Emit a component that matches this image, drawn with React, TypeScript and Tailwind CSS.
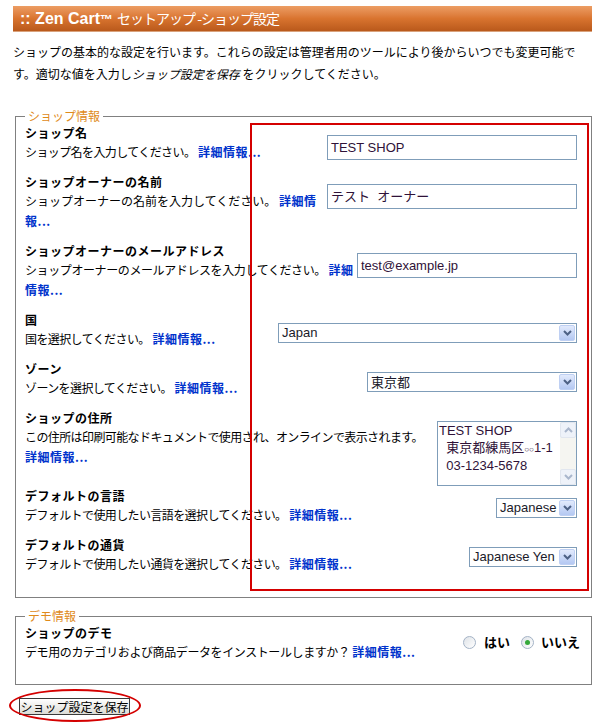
import React from 'react';

const cjk = "font-['Noto_Sans_CJK_JP','Noto_Sans_CJK_SC',sans-serif]";
const latin = "font-['Liberation_Sans','Noto_Sans_CJK_JP',sans-serif]";

function MoreInfo() {
  return <a className="cursor-pointer font-bold tracking-[0.5px] text-[#0033cc]">詳細情報...</a>;
}

function TextInput({ value, w }: { value: string; w: string }) {
  return (
    <div className={`flex h-[25px] items-center whitespace-pre border border-[#7f9db9] bg-white pl-[3px] text-[13px] text-[#2f1238] ${latin} ${w}`}>
      {value}
    </div>
  );
}

function Chevron({ color = '#4d6185', up = false }: { color?: string; up?: boolean }) {
  return (
    <svg width="9" height="6" viewBox="0 0 9 6">
      <path d={up ? 'M1 5 L4.5 1.5 L8 5' : 'M1 1 L4.5 4.5 L8 1'} fill="none" stroke={color} strokeWidth="2" />
    </svg>
  );
}

function SelectBox({ value, w, jp = false }: { value: string; w: string; jp?: boolean }) {
  return (
    <div className={`flex h-[20px] items-center border border-[#7f9db9] bg-white ${w}`}>
      <span className={`flex-1 pl-[3px] text-[13px] leading-[18px] text-[#1a1a2a] ${jp ? cjk : latin}`}>{value}</span>
      <span className="mr-[1px] flex h-[16px] w-[16px] items-center justify-center rounded-[2px] border border-[#bfd0f3] bg-gradient-to-b from-[#e2eafc] to-[#b4c8f2]">
        <Chevron />
      </span>
    </div>
  );
}

function AddressBox() {
  return (
    <div className="flex h-[65px] w-[140px] border border-[#7f9db9] bg-white">
      <div className={`flex-1 whitespace-pre pl-[1px] pt-[1px] text-[13px] leading-[16px] text-[#2f1238] ${latin}`}>
        <div>TEST SHOP</div>
        <div>
          {'  '}
          <span className={cjk}>東京都練馬区</span>
          <span className="text-[8px]">○○</span>1-1
        </div>
        <div>{'  '}03-1234-5678</div>
      </div>
      <div className="flex w-[16px] flex-col justify-between bg-[#f5f5f1]">
        <span className="flex h-[16px] items-center justify-center rounded-[2px] border border-[#e1e6ef] bg-[#eef2f9]">
          <Chevron up color="#a9b6cc" />
        </span>
        <span className="flex h-[16px] items-center justify-center rounded-[2px] border border-[#e1e6ef] bg-[#eef2f9]">
          <Chevron color="#a9b6cc" />
        </span>
      </div>
    </div>
  );
}

function Row({
  title,
  desc,
  control,
  top,
  mb,
  track = 'tracking-[-0.6px]',
}: {
  title: string;
  desc: React.ReactNode;
  control: React.ReactNode;
  top: string;
  mb: string;
  track?: string;
}) {
  return (
    <div className={`flow-root ${mb}`}>
      <div className={`float-right ${top}`}>{control}</div>
      <div className="text-[12px] font-bold leading-[19px] tracking-[0.5px]">{title}</div>
      <div className="text-[12px] leading-[20px]">
        <span className={track}>{desc}</span> <MoreInfo />
      </div>
    </div>
  );
}

function Radio({ checked = false }: { checked?: boolean }) {
  return (
    <span className="flex h-[13px] w-[13px] items-center justify-center rounded-full border border-[#a4b3c6] bg-gradient-to-br from-[#dfe3e8] to-white">
      {checked && <span className="h-[5px] w-[5px] rounded-full bg-[#35a83a]" />}
    </span>
  );
}

export default function App() {
  return (
    <div className={`relative h-[723px] w-[603px] bg-white pl-[13px] pt-[6px] text-black ${cjk}`}>
      <div className="flex h-[26px] w-[579px] items-center border-b border-[#d9a27c] bg-gradient-to-b from-[#ec9d63] via-[#d9742f] to-[#b9591b] pl-[7px] text-white">
        <span className={`text-[16px] font-bold ${latin}`}>
          :: Zen Cart<span className="text-[13px]">™</span>
        </span>
        <span className="ml-[4px] whitespace-pre text-[14px] tracking-[-1px]">セットアップ -ショップ設定</span>
      </div>

      <p className="mt-[9px] w-[576px] text-[12px] leading-[22px]">
        ショップの基本的な設定を行います。これらの設定は管理者用のツールにより後からいつでも変更可能です。適切な値を入力し
        <i>ショップ設定を保存</i> をクリックしてください。
      </p>

      <fieldset className="ml-[2px] mt-[24px] w-[577px] border border-[#808080] pb-[13px] pl-[9px] pr-[14px]">
        <legend className="px-[3px] text-[12px] leading-[14px] text-[#e08a1a]">ショップ情報</legend>
        <Row title="ショップ名" desc="ショップ名を入力してください。" top="mt-[12px]" mb="mb-[10px]" control={<TextInput value="TEST SHOP" w="w-[250px]" />} />
        <Row
          title="ショップオーナーの名前"
          desc="ショップオーナーの名前を入力してください。"
          top="mt-[12px]"
          mb="mb-[10px]"
          track="tracking-normal"
          control={<TextInput value="テスト  オーナー" w="w-[250px]" />}
        />
        <Row
          title="ショップオーナーのメールアドレス"
          desc="ショップオーナーのメールアドレスを入力してください。"
          top="mt-[12px]"
          mb="mb-[10px]"
          track="tracking-[-0.4px]"
          control={<TextInput value="test@example.jp" w="w-[220px]" />}
        />
        <Row title="国" desc="国を選択してください。" top="mt-[13px]" mb="mb-[10px]" control={<SelectBox value="Japan" w="w-[299px]" />} />
        <Row title="ゾーン" desc="ゾーンを選択してください。" top="mt-[13px]" mb="mb-[10px]" control={<SelectBox value="東京都" w="w-[210px]" jp />} />
        <Row
          title="ショップの住所"
          desc="この住所は印刷可能なドキュメントで使用され、オンラインで表示されます。"
          top="mt-[13px]"
          mb="mb-0"
          control={<AddressBox />}
        />
        <Row title="デフォルトの言語" desc="デフォルトで使用したい言語を選択してください。" top="mt-[12px]" mb="mb-[10px]" control={<SelectBox value="Japanese" w="w-[81px]" />} />
        <Row title="デフォルトの通貨" desc="デフォルトで使用したい通貨を選択してください。" top="mt-[12px]" mb="mb-[10px]" control={<SelectBox value="Japanese Yen" w="w-[108px]" />} />
      </fieldset>

      <fieldset className="ml-[2px] mt-[11px] w-[577px] border border-[#808080] pb-[12px] pl-[9px] pr-[11px]">
        <legend className="px-[3px] text-[12px] leading-[14px] text-[#e08a1a]">デモ情報</legend>
        <div className="mb-[10px] flow-root">
          <div className="float-right mt-[10px] flex h-[18px] items-center text-[13px] font-bold">
            <Radio />
            <span className="ml-[8px]">はい</span>
            <span className="ml-[11px]">
              <Radio checked />
            </span>
            <span className="ml-[7px]">いいえ</span>
          </div>
          <div className="text-[12px] font-bold leading-[19px] tracking-[0.5px]">ショップのデモ</div>
          <div className="text-[12px] leading-[20px]">
            <span className="tracking-[-0.4px]">デモ用のカテゴリおよび商品データをインストールしますか？</span> <MoreInfo />
          </div>
        </div>
      </fieldset>

      <button className="ml-[6px] mt-[13px] flex h-[17px] w-[111px] items-center justify-center whitespace-nowrap border border-[#3a3a3a] bg-gradient-to-b from-white to-[#dcdcd6] text-[12px] leading-[15px] text-black">
        ショップ設定を保存
      </button>

      <div className="pointer-events-none absolute left-[250px] top-[123px] h-[468px] w-[339px] border-2 border-[#d40000]" />
      <div className="pointer-events-none absolute left-[9px] top-[689px] h-[33px] w-[132px] rounded-[50%] border-2 border-[#d40000]" />
    </div>
  );
}
